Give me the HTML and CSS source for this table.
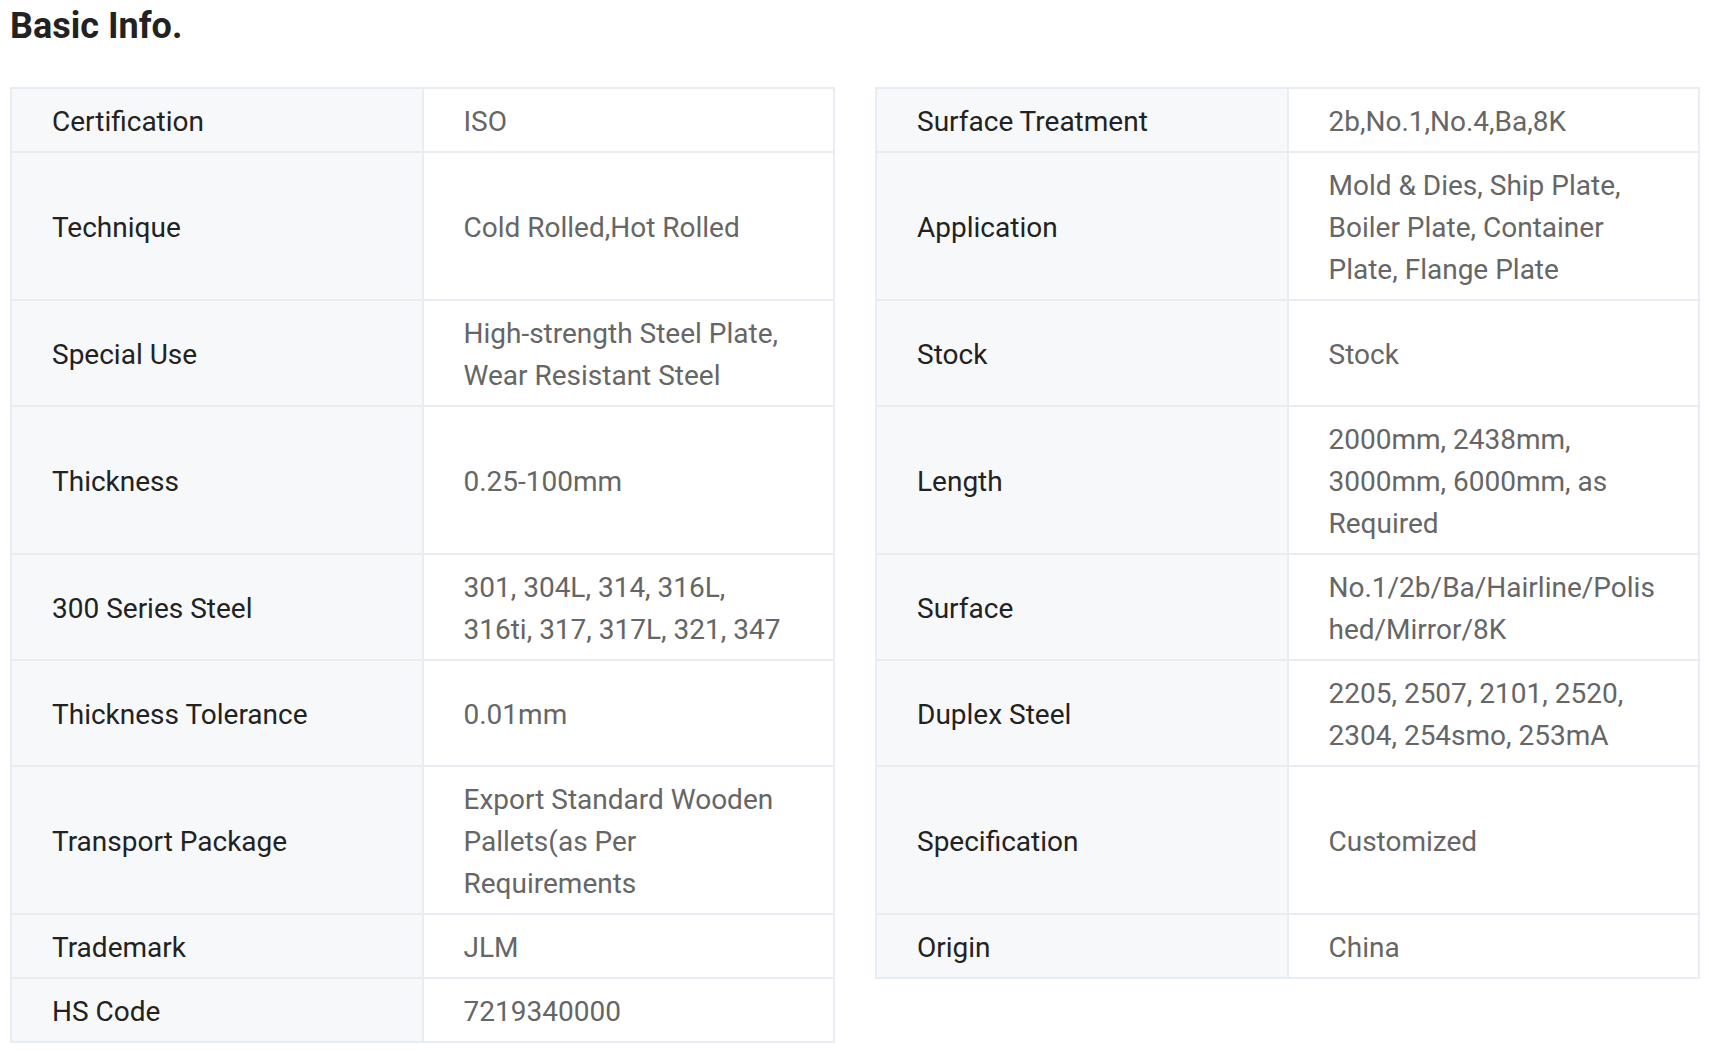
FILE: index.html
```html
<!DOCTYPE html>
<html lang="en">
<head>
<meta charset="utf-8">
<title>Basic Info.</title>
<link rel="stylesheet" href="styles.css">
</head>
<body>
<div class="page">
  <h1 class="title">Basic Info.</h1>
  <div class="tables">
    <table class="info">
      <tbody>
        <tr><th>Certification</th><td>ISO</td></tr>
        <tr><th>Technique</th><td><div class="v3">Cold Rolled,Hot Rolled</div></td></tr>
        <tr><th>Special Use</th><td>High-strength Steel Plate, Wear Resistant Steel</td></tr>
        <tr><th>Thickness</th><td><div class="v3">0.25-100mm</div></td></tr>
        <tr><th>300 Series Steel</th><td>301, 304L, 314, 316L, 316ti, 317, 317L, 321, 347</td></tr>
        <tr><th>Thickness Tolerance</th><td><div class="v2">0.01mm</div></td></tr>
        <tr><th>Transport Package</th><td>Export Standard Wooden Pallets(as Per Requirements</td></tr>
        <tr><th>Trademark</th><td>JLM</td></tr>
        <tr><th>HS Code</th><td>7219340000</td></tr>
      </tbody>
    </table>
    <table class="info">
      <tbody>
        <tr><th>Surface Treatment</th><td>2b,No.1,No.4,Ba,8K</td></tr>
        <tr><th>Application</th><td>Mold &amp; Dies, Ship Plate, Boiler Plate, Container Plate, Flange Plate</td></tr>
        <tr><th>Stock</th><td><div class="v2">Stock</div></td></tr>
        <tr><th>Length</th><td>2000mm, 2438mm, 3000mm, 6000mm, as Required</td></tr>
        <tr><th>Surface</th><td>No.1/2b/Ba/Hairline/Polished/Mirror/8K</td></tr>
        <tr><th>Duplex Steel</th><td>2205, 2507, 2101, 2520, 2304, 254smo, 253mA</td></tr>
        <tr><th>Specification</th><td><div class="v3">Customized</div></td></tr>
        <tr><th>Origin</th><td>China</td></tr>
      </tbody>
    </table>
  </div>
</div>
</body>
</html>
```
FILE: styles.css
```css
html, body {
  margin: 0;
  padding: 0;
  background: #ffffff;
}
body {
  font-family: Roboto, "Liberation Sans", Arial, sans-serif;
}
.page {
  padding: 2px 9px 0 10px;
}
.title {
  margin: 0;
  font-size: 36px;
  line-height: 48px;
  font-weight: 700;
  color: #222222;
}
.tables {
  margin-top: 37px;
  display: flex;
  align-items: flex-start;
  gap: 40px;
}
.info {
  flex: 1 1 0;
  width: 0;
  table-layout: fixed;
  border-collapse: collapse;
  border: 2px solid #e8edf3;
}
.info th,
.info td {
  width: 50%;
  border: 2px solid #e8edf3;
  padding: 12px 38px 8px 40px;
  font-size: 28px;
  line-height: 42px;
  text-align: left;
  vertical-align: middle;
  overflow-wrap: break-word;
}
.info th {
  font-weight: 400;
  color: #222222;
  background: #f7f8fa;
}
.info td {
  color: #666666;
  background: #ffffff;
}
.v2 { min-height: 84px; display: flex; align-items: center; }
.v3 { min-height: 126px; display: flex; align-items: center; }
```
